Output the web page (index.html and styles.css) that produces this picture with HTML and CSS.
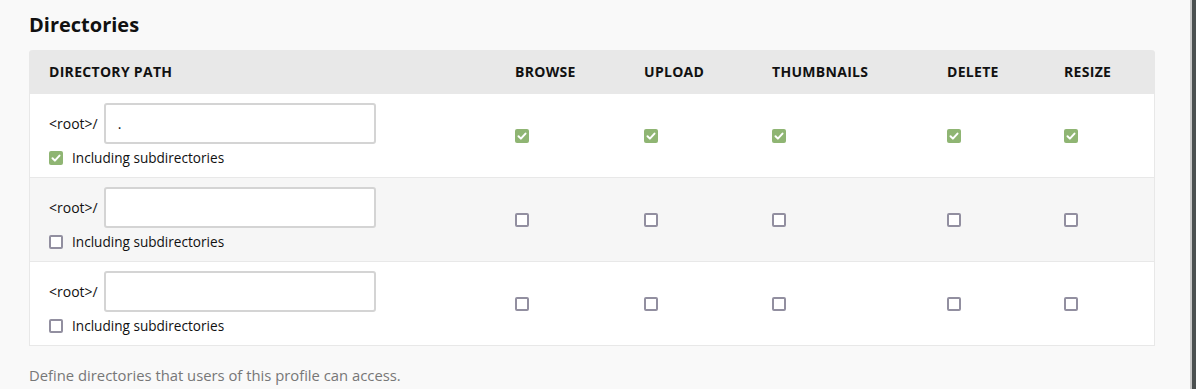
FILE: index.html
```html
<!DOCTYPE html>
<html lang="en">
<head>
    <meta charset="UTF-8">
    <title>Directories</title>
    <link rel="stylesheet" href="styles.css">
</head>
<body>

<div class="page">
    <h2>Directories</h2>

    <div class="dir-table">
        <div class="row head">
            <div class="cell path">Directory path</div>
            <div class="cell">Browse</div>
            <div class="cell">Upload</div>
            <div class="cell">Thumbnails</div>
            <div class="cell">Delete</div>
            <div class="cell">Resize</div>
        </div>

        <!-- row 1: root dir, everything on -->
        <div class="row">
            <div class="cell path">
                <div class="path-line">
                    <span>&lt;root&gt;/</span>
                    <input type="text" class="path-input" value=".">
                </div>
                <label class="sub"><span class="box on"><svg viewBox="0 0 14 14"><path d="M3.5 7.2l2.4 2.4 4.6-5" /></svg></span>Including subdirectories</label>
            </div>
            <div class="cell"><span class="box on"><svg viewBox="0 0 14 14"><path d="M3.5 7.2l2.4 2.4 4.6-5" /></svg></span></div>
            <div class="cell"><span class="box on"><svg viewBox="0 0 14 14"><path d="M3.5 7.2l2.4 2.4 4.6-5" /></svg></span></div>
            <div class="cell"><span class="box on"><svg viewBox="0 0 14 14"><path d="M3.5 7.2l2.4 2.4 4.6-5" /></svg></span></div>
            <div class="cell"><span class="box on"><svg viewBox="0 0 14 14"><path d="M3.5 7.2l2.4 2.4 4.6-5" /></svg></span></div>
            <div class="cell"><span class="box on"><svg viewBox="0 0 14 14"><path d="M3.5 7.2l2.4 2.4 4.6-5" /></svg></span></div>
        </div>

        <div class="row alt">
            <div class="cell path">
                <div class="path-line">
                    <span>&lt;root&gt;/</span>
                    <input type="text" class="path-input" value="">
                </div>
                <label class="sub"><span class="box"></span>Including subdirectories</label>
            </div>
            <div class="cell"><span class="box"></span></div>
            <div class="cell"><span class="box"></span></div>
            <div class="cell"><span class="box"></span></div>
            <div class="cell"><span class="box"></span></div>
            <div class="cell"><span class="box"></span></div>
        </div>

        <div class="row">
            <div class="cell path">
                <div class="path-line">
                    <span>&lt;root&gt;/</span>
                    <input type="text" class="path-input" value="">
                </div>
                <label class="sub"><span class="box"></span>Including subdirectories</label>
            </div>
            <div class="cell"><span class="box"></span></div>
            <div class="cell"><span class="box"></span></div>
            <div class="cell"><span class="box"></span></div>
            <div class="cell"><span class="box"></span></div>
            <div class="cell"><span class="box"></span></div>
        </div>
    </div>

    <p class="hint">Define directories that users of this profile can access.</p>
</div>

<div class="scrollbar"></div>

</body>
</html>
```

FILE: styles.css
```css
body {
    font-family: "Open Sans", Arial, sans-serif;
    margin: 0;
    padding: 0;
    background-color: #f9f9f9;
    color: #111;
    display: flex;
    height: 389px;
    overflow: hidden;
}
.page {
    flex: 1;
    padding: 11px 0 0 29px;
}
.scrollbar {
    width: 4px;
    border-left: 2px solid #c9c9c9;
    background-color: #4b5050;
}
h2 {
    font-size: 20px;
    font-weight: 700;
    line-height: 28px;
    margin: 0 0 11px 0;
}
.dir-table {
    width: 1126px;
    box-sizing: border-box;
    border: 1px solid #e8e8e8;
    border-top: none;
    border-radius: 4px 4px 0 0;
    background-color: #fff;
}
.row {
    display: grid;
    grid-template-columns: 465px 129px 128px 175px 117px 1fr;
    border-top: 1px solid #e8e8e8;
}
.row.alt {
    background-color: #f6f6f6;
}
.row.head {
    background-color: #e8e8e8;
    border-top: none;
    border-radius: 4px 4px 0 0;
    height: 43px;
    margin: 0 -1px;
    padding: 0 1px;
}
.head .cell {
    font-size: 14px;
    font-weight: 700;
    text-transform: uppercase;
    letter-spacing: 0.3px;
}
.cell {
    display: flex;
    align-items: center;
    padding-left: 20px;
    font-size: 14px;
}
.cell.path {
    flex-direction: column;
    align-items: flex-start;
    justify-content: center;
    padding: 9px 0 9px 19px;
}
.head .cell.path {
    padding: 0 0 0 19px;
}
.path-line {
    display: flex;
    align-items: center;
    gap: 6px;
}
.path-input {
    width: 272px;
    height: 41px;
    box-sizing: border-box;
    border: 2px solid #d4d4d4;
    border-radius: 3px;
    padding: 0 12px;
    font-family: "Open Sans", Arial, sans-serif;
    font-size: 14px;
    color: #111;
    background-color: #fff;
}
.sub {
    display: flex;
    align-items: center;
    gap: 9px;
    margin-top: 4px;
    line-height: 20px;
    font-size: 13.6px;
}
.box {
    width: 14px;
    height: 14px;
    box-sizing: border-box;
    border: 2px solid #928fa0;
    border-radius: 2px;
    background-color: #fff;
    display: inline-flex;
}
.box.on {
    border: none;
    background-color: #8fb573;
}
.box svg {
    width: 14px;
    height: 14px;
    fill: none;
    stroke: #fff;
    stroke-width: 2;
    stroke-linecap: round;
    stroke-linejoin: round;
}
.hint {
    margin: 19px 0 0 0;
    font-size: 14.8px;
    color: #777;
}
```
